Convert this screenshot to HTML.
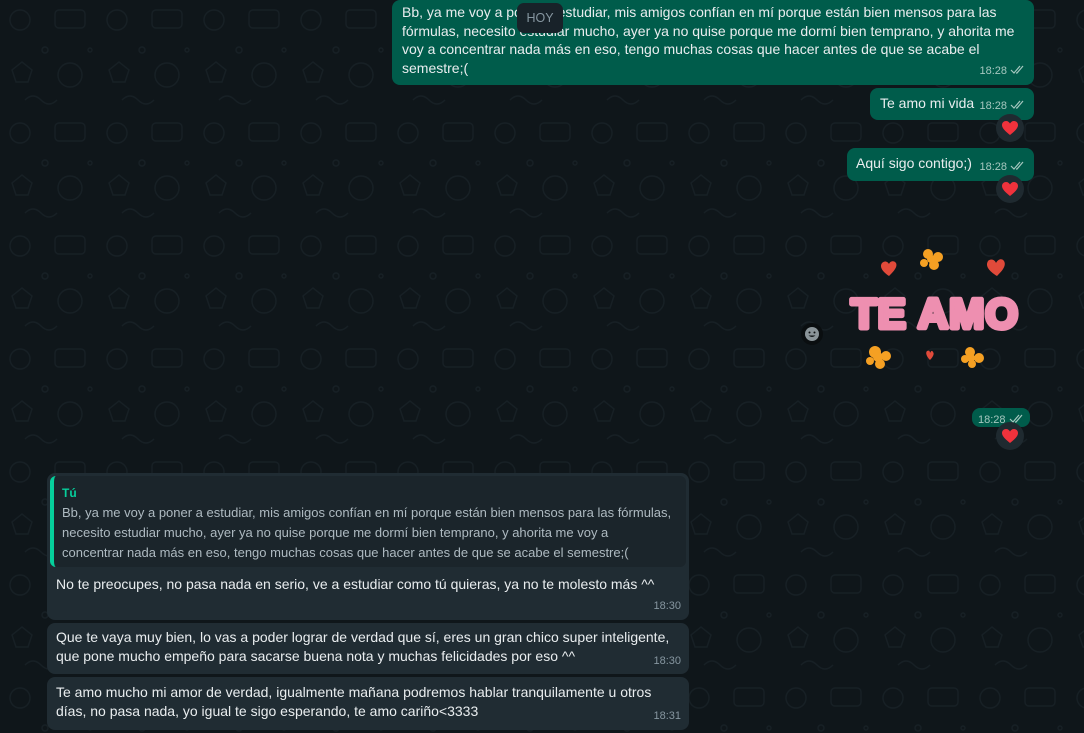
<!DOCTYPE html>
<html><head><meta charset="utf-8"><style>
*{margin:0;padding:0;box-sizing:border-box}
body{width:1084px;height:733px;overflow:hidden;background:#0f161a;font-family:"Liberation Sans",sans-serif;color:#e9edef;position:relative}
.b{position:absolute;border-radius:8px;font-size:14px;line-height:19px;white-space:nowrap}
.out{background:#005c4b}
.in{background:#202c33}
.t{position:absolute;font-size:11px;color:#a5c7bf;white-space:nowrap}
.in .t{color:#8696a0}
.ck{display:inline-block;margin-left:3px;vertical-align:-1px}
.r{position:absolute;width:28px;height:28px;border-radius:50%;background:#1f2a30;display:flex;align-items:center;justify-content:center}
</style></head><body>
<svg style="position:absolute;left:0;top:0" width="1084" height="733">
<defs><pattern id="p" width="97" height="113" patternUnits="userSpaceOnUse">
<g fill="none" stroke="#172025" stroke-width="1.4">
<circle cx="20" cy="20" r="10"/><rect x="55" y="10" width="30" height="18" rx="4"/><path d="M12 70l10 -8 10 8 -4 12h-12z"/><circle cx="70" cy="75" r="12"/><circle cx="45" cy="50" r="3"/><circle cx="90" cy="50" r="2"/><path d="M25 100q8 -8 16 0t16 0"/></g></pattern></defs>
<rect width="1084" height="733" fill="url(#p)"/>
</svg>

<div class="b out" style="left:392px;top:0;width:642px;height:85px;padding:3px 10px;line-height:18.7px">Bb, ya me voy a poner a estudiar, mis amigos confían en mí porque están bien mensos para las<br>fórmulas, necesito estudiar mucho, ayer ya no quise porque me dormí bien temprano, y ahorita me<br>voy a concentrar nada más en eso, tengo muchas cosas que hacer antes de que se acabe el<br>semestre;(
<span class="t" style="right:8px;bottom:4px">18:28<svg class="ck" width="16" height="10" viewBox="0 0 16 10"><path d="M1 5l3 3 6-7M6 8l1 0 6-7" stroke="#a5c7bf" fill="none" stroke-width="1.2"/></svg></span></div>
<div style="position:absolute;left:517px;top:3px;width:46px;height:30px;background:#182229;border-radius:7px;color:#8696a0;font-size:12.5px;text-align:center;line-height:30px">HOY</div>

<div class="b out" style="left:870px;top:88px;width:164px;height:32px;padding:6px 10px">Te amo mi vida
<span class="t" style="right:8px;bottom:4px">18:28<svg class="ck" width="16" height="10" viewBox="0 0 16 10"><path d="M1 5l3 3 6-7M6 8l1 0 6-7" stroke="#a5c7bf" fill="none" stroke-width="1.2"/></svg></span></div>
<div class="r" style="left:996px;top:114px"><svg width="16" height="15" viewBox="0 0 16 15"><path d="M8 14C3 10 0 7 0 4 0 1.5 2 0 4 0c2 0 3 1 4 2.5C9 1 10 0 12 0c2 0 4 1.5 4 4 0 3-3 6-8 10z" fill="#f0323c"/></svg></div>

<div class="b out" style="left:847px;top:148px;width:187px;height:33px;padding:6px 9px">Aquí sigo contigo;)
<span class="t" style="right:8px;bottom:4px">18:28<svg class="ck" width="16" height="10" viewBox="0 0 16 10"><path d="M1 5l3 3 6-7M6 8l1 0 6-7" stroke="#a5c7bf" fill="none" stroke-width="1.2"/></svg></span></div>
<div class="r" style="left:996px;top:175px"><svg width="16" height="15" viewBox="0 0 16 15"><path d="M8 14C3 10 0 7 0 4 0 1.5 2 0 4 0c2 0 3 1 4 2.5C9 1 10 0 12 0c2 0 4 1.5 4 4 0 3-3 6-8 10z" fill="#f0323c"/></svg></div>

<svg style="position:absolute;left:840px;top:240px" width="190" height="135" viewBox="0 0 190 135">
<g fill="#e04a3a"><path d="M49 36c-6-4-10-9-7-13 3-3 6-1 7 1 1-3 5-4 7-1 2 4-3 9-7 13z"/><path d="M157 36c-8-5-12-10-9-15 3-3 7-1 8 2 2-4 6-5 8-2 3 5-3 11-7 15z"/><path d="M90 120c-3-3-5-7-3-9 2-1 3 0 3 2 1-2 2-3 3-1 2 2-1 6-3 8z"/></g>
<g fill="#f5a023"><circle cx="88" cy="14" r="5"/><circle cx="98" cy="17" r="5"/><circle cx="94" cy="25" r="5"/><circle cx="84" cy="23" r="4"/><circle cx="91" cy="19" r="4"/>
<circle cx="35" cy="112" r="6"/><circle cx="46" cy="116" r="5"/><circle cx="40" cy="124" r="5"/><circle cx="30" cy="121" r="4"/><circle cx="38" cy="117" r="5"/>
<circle cx="130" cy="112" r="5"/><circle cx="139" cy="118" r="5"/><circle cx="132" cy="124" r="4"/><circle cx="125" cy="119" r="4"/><circle cx="131" cy="118" r="4"/></g>
<text x="95" y="88" text-anchor="middle" font-family="Liberation Sans,sans-serif" font-weight="bold" font-size="42" fill="#ee8fb0" stroke="#ee8fb0" stroke-width="5" stroke-linejoin="round" letter-spacing="1">TE AMO</text>
</svg>
<div style="position:absolute;left:801px;top:323px;width:22px;height:22px;border-radius:50%;background:#0a0e10"><svg width="22" height="22" viewBox="0 0 22 22"><circle cx="11" cy="11" r="7" fill="#8a9499"/><circle cx="8.5" cy="9.5" r="1" fill="#0a0e10"/><circle cx="13.5" cy="9.5" r="1" fill="#0a0e10"/><path d="M7.5 12.5q3.5 3 7 0z" fill="#0a0e10"/></svg></div>

<div class="b out" style="left:972px;top:408px;width:58px;height:19px"><span class="t" style="left:6px;top:3px">18:28<svg class="ck" width="16" height="10" viewBox="0 0 16 10"><path d="M1 5l3 3 6-7M6 8l1 0 6-7" stroke="#a5c7bf" fill="none" stroke-width="1.2"/></svg></span></div>
<div class="r" style="left:996px;top:422px"><svg width="16" height="15" viewBox="0 0 16 15"><path d="M8 14C3 10 0 7 0 4 0 1.5 2 0 4 0c2 0 3 1 4 2.5C9 1 10 0 12 0c2 0 4 1.5 4 4 0 3-3 6-8 10z" fill="#f0323c"/></svg></div>

<div class="b in" style="left:47px;top:473px;width:642px;height:147px">
<div style="position:absolute;left:3px;top:3px;width:636px;height:91px;background:#1b252b;border-radius:6px;border-left:4px solid #06cf9c;padding:9px 0 0 8px;font-size:13px;line-height:20px;color:#aebac1">
<div style="color:#06cf9c;font-weight:bold;font-size:12px;line-height:16px;margin-bottom:2px">Tú</div>
Bb, ya me voy a poner a estudiar, mis amigos confían en mí porque están bien mensos para las fórmulas,<br>necesito estudiar mucho, ayer ya no quise porque me dormí bien temprano, y ahorita me voy a<br>concentrar nada más en eso, tengo muchas cosas que hacer antes de que se acabe el semestre;(
</div>
<div style="position:absolute;left:9px;top:102px">No te preocupes, no pasa nada en serio, ve a estudiar como tú quieras, ya no te molesto más ^^</div>
<span class="t" style="right:8px;bottom:4px">18:30</span></div>

<div class="b in" style="left:47px;top:623px;width:642px;height:51px;padding:5px 9px">Que te vaya muy bien, lo vas a poder lograr de verdad que sí, eres un gran chico super inteligente,<br>que pone mucho empeño para sacarse buena nota y muchas felicidades por eso ^^
<span class="t" style="right:8px;bottom:3px">18:30</span></div>

<div class="b in" style="left:47px;top:677px;width:642px;height:53px;padding:6px 9px">Te amo mucho mi amor de verdad, igualmente mañana podremos hablar tranquilamente u otros<br>días, no pasa nada, yo igual te sigo esperando, te amo cariño&lt;3333
<span class="t" style="right:8px;bottom:4px">18:31</span></div>
</body></html>
